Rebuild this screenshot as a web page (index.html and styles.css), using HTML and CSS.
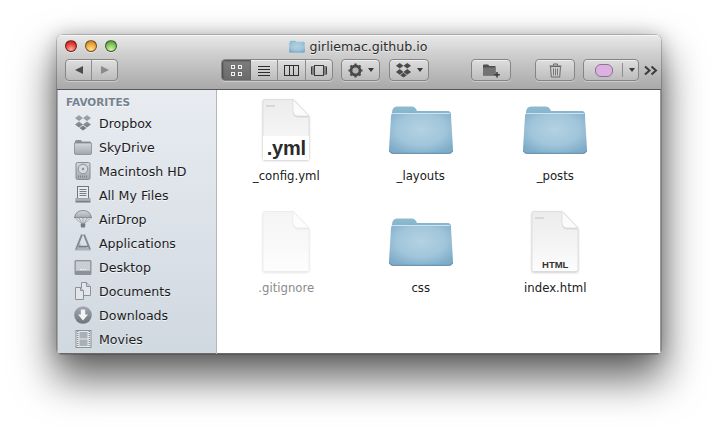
FILE: index.html
```html
<!DOCTYPE html>
<html lang="en">
<head>
<meta charset="utf-8">
<title>girliemac.github.io</title>
<link rel="stylesheet" href="styles.css">
</head>
<body>
<svg class="defs" width="0" height="0" aria-hidden="true">
  <defs>
    <radialGradient id="fold" cx=".5" cy=".4" r=".65"><stop offset="0" stop-color="#b4d2e2"/><stop offset=".6" stop-color="#a0c5da"/><stop offset="1" stop-color="#7fabc8"/></radialGradient>
    <linearGradient id="foldback" x1="0" y1="0" x2="0" y2="1"><stop offset="0" stop-color="#8fbbd2"/><stop offset="1" stop-color="#7eacc6"/></linearGradient>
    <linearGradient id="page" x1="0" y1="0" x2="0" y2="1"><stop offset="0" stop-color="#ececec"/><stop offset=".55" stop-color="#f4f4f4"/><stop offset="1" stop-color="#fdfdfd"/></linearGradient>
    <linearGradient id="side" x1="0" y1="0" x2="0" y2="1"><stop offset="0" stop-color="#a3a9b0"/><stop offset="1" stop-color="#6d747c"/></linearGradient>
    <linearGradient id="sidelight" x1="0" y1="0" x2="0" y2="1"><stop offset="0" stop-color="#d3d8dd"/><stop offset="1" stop-color="#9fa6ae"/></linearGradient>
    <symbol id="folder" viewBox="0 0 64 48">
      <path d="M3 7 Q3 .5 8 .5 H23 Q26 .5 27 3 L28 5 H59 Q62 5 62 9 V14 H2 Z" fill="url(#foldback)"/>
      <path d="M2 10 Q2 7 6 7 H58 Q62 7 62 10 L64 43 Q64 48 59 48 H5 Q0 48 0 43 Z" fill="url(#fold)"/>
      <path d="M3 8 Q3 7.500 6 7.500 H58 Q61 7.500 61 8" fill="none" stroke="#cfe4ef" stroke-width="1"/>
      <path d="M0 44 Q1 47.300 5 47.300 H59 Q63 47.300 64 44" fill="none" stroke="#6a97b6" stroke-width="1.300"/>
    </symbol>
    <symbol id="sheet" viewBox="0 0 48 62">
      <path d="M1 2 Q1 .5 2.500 .5 H31 L47 17 V59 Q47 60.500 45 60.500 H3 Q1 60.500 1 59 Z" fill="url(#page)" stroke="#d4d4d4" stroke-width=".6"/>
      <path d="M31 .5 L47 17 H37 Q32 17 31 13 Z" fill="#000" opacity=".09" transform="translate(0 1.500)"/>
      <path d="M31 .5 L47 17 H36 Q31.500 17 31 12 Z" fill="#fbfbfb" stroke="#cfcfcf" stroke-width=".5"/>
    </symbol>
    <symbol id="dbx" viewBox="0 0 18 18">
      <path d="M5 1 L9 4 L5 7 L1 4 Z M13 1 L17 4 L13 7 L9 4 Z M5 7.500 L9 10.500 L5 13.500 L1 10.500 Z M13 7.500 L17 10.500 L13 13.500 L9 10.500 Z M5.500 14 L9 11.500 L12.500 14 L9 16.500 Z"/>
    </symbol>
  </defs>
</svg>

<main class="window">
  <header class="chrome">
    <div class="titlebar">
      <div class="lights">
        <span class="light red"></span><span class="light amber"></span><span class="light green"></span>
      </div>
      <div class="title">
        <svg class="title-icon" width="16" height="13"><use href="#folder"/></svg>
        <span>girliemac.github.io</span>
      </div>
    </div>
    <div class="toolbar">
      <div class="btn nav">
        <span class="nav-part divided"><svg width="10" height="10" viewBox="0 0 10 10"><path d="M9 1 V9 L1 5 Z" fill="#4c4c4c"/></svg></span>
        <span class="nav-part"><svg width="10" height="10" viewBox="0 0 10 10"><path d="M1 1 V9 L9 5 Z" fill="#8a8a8a"/></svg></span>
      </div>
      <div class="btn views">
        <span class="view active"><svg width="13" height="13" viewBox="0 0 13 13" fill="none" stroke="#f0f0f0"><rect x="1.500" y="1.500" width="3" height="3"/><rect x="8.500" y="1.500" width="3" height="3"/><rect x="1.500" y="8.500" width="3" height="3"/><rect x="8.500" y="8.500" width="3" height="3"/></svg></span>
        <span class="view divided"><svg width="14" height="13" viewBox="0 0 14 13" stroke="#2e2e2e"><path d="M1 2.500 H13 M1 5.500 H13 M1 8.500 H13 M1 11.500 H13"/></svg></span>
        <span class="view divided"><svg width="15" height="13" viewBox="0 0 15 13" fill="none" stroke="#2e2e2e"><rect x=".5" y="1.500" width="14" height="10"/><path d="M5.500 1.500 V11.500 M9.500 1.500 V11.500"/></svg></span>
        <span class="view"><svg width="16" height="13" viewBox="0 0 16 13" fill="none" stroke="#3a3a3a"><rect x="3.500" y="1.500" width="9" height="10"/><path d="M.5 2.500 V10.500 M2 2 V11"/><path d="M14 2 V11 M15.500 2.500 V10.500"/></svg></span>
      </div>
      <div class="btn menu gear">
        <svg width="15" height="15" viewBox="0 0 15 15"><circle cx="7.500" cy="7.500" r="4.600" fill="none" stroke="#4a4a4a" stroke-width="2.600"/><path d="M7.500 .5 V14.500 M.5 7.500 H14.500 M2.500 2.500 L12.500 12.500 M12.500 2.500 L2.500 12.500" stroke="#4a4a4a" stroke-width="2.200"/><circle cx="7.500" cy="7.500" r="3" fill="#b5b5b5"/></svg>
        <span class="caret"></span>
      </div>
      <div class="btn menu dropbox">
        <svg class="dbx-tool" width="17" height="17"><use href="#dbx"/></svg>
        <span class="caret"></span>
      </div>
      <div class="btn square newfolder">
        <svg width="19" height="15" viewBox="0 0 19 15"><path d="M1 2.500 Q1 1.500 2 1.500 H6 L7.500 3 H13.500 V12.500 H1 Z" fill="#4f4f4f"/><path d="M1 4.500 H13.500 V12.500 H1 Z" fill="#737373"/><path d="M15 9 V14.500 M12.300 11.700 H17.800" stroke="#3a3a3a" stroke-width="1.500"/></svg>
      </div>
      <div class="btn square trash">
        <svg width="13" height="15" viewBox="0 0 13 15"><path d="M.5 3 H12.500 M4.500 2.500 V1 H8.500 V2.500" fill="none" stroke="#666"/><path d="M1.500 3.500 H11.500 L10.700 14 H2.300 Z" fill="#cfcfcf" stroke="#666"/><path d="M4.500 5.500 V12.500 M6.500 5.500 V12.500 M8.500 5.500 V12.500" stroke="#777"/></svg>
      </div>
      <div class="btn label">
        <span class="label-pill"></span>
        <span class="label-sep"></span>
        <span class="caret"></span>
      </div>
      <svg class="more" width="14" height="11" viewBox="0 0 14 11" fill="none" stroke="#3c3c3c" stroke-width="2"><path d="M1 1.500 L5.500 5.500 L1 9.500 M7.500 1.500 L12 5.500 L7.500 9.500"/></svg>
    </div>
  </header>

  <div class="body">
    <nav class="sidebar">
      <div class="side-head">FAVORITES</div>
      <ul class="side-list">
        <li class="side-item"><svg class="side-icon dbx-side" width="18" height="18"><use href="#dbx"/></svg>Dropbox</li>
        <li class="side-item"><svg class="side-icon" width="18" height="18" viewBox="0 0 18 18"><path d="M1 3.500 Q1 2 2.500 2 H7 L8 3.500 H16 Q17 3.500 17 5 V7 H1 Z" fill="#8a9098"/><path d="M.5 5 H17.500 V15 Q17.500 16.500 16 16.500 H2 Q.5 16.500 .5 15 Z" fill="url(#sidelight)" stroke="#7b828a" stroke-width=".7"/></svg>SkyDrive</li>
        <li class="side-item"><svg class="side-icon" width="18" height="18" viewBox="0 0 18 18"><rect x="2" y=".5" width="14" height="17" rx="1.500" fill="url(#sidelight)" stroke="#858c94"/><circle cx="9" cy="7" r="4.800" fill="#d5dade" stroke="#8b929a"/><circle cx="9" cy="7" r="1.200" fill="#8b929a"/><path d="M4 14.500 H14" stroke="#7d848c" stroke-width="2" stroke-dasharray="1 1"/></svg>Macintosh HD</li>
        <li class="side-item"><svg class="side-icon" width="18" height="18" viewBox="0 0 18 18"><rect x="3.500" y=".5" width="11" height="12" fill="#e8ebee" stroke="#6d747c"/><path d="M5.500 3.500 H12.500 M5.500 5.500 H12.500 M5.500 7.500 H12.500 M5.500 9.500 H12.500" stroke="#767d85"/><path d="M1.500 12 H16.500 V16.500 H1.500 Z" fill="url(#side)"/><path d="M2 14 H16" stroke="#e8ebee" stroke-opacity=".6"/></svg>All My Files</li>
        <li class="side-item"><svg class="side-icon" width="18" height="18" viewBox="0 0 18 18"><path d="M.5 8 Q1.500 .5 9 .5 Q16.500 .5 17.500 8 Q15 6.500 13 8 Q11 6.500 9 8 Q7 6.500 5 8 Q3 6.500 .5 8 Z" fill="url(#sidelight)" stroke="#737a82" stroke-width=".8"/><path d="M1.500 8 L9 15 L16.500 8 M5 8 L9 15 L13 8 M9 8 V15" fill="none" stroke="#858c94" stroke-width=".7"/><rect x="6.800" y="13.500" width="4.400" height="4" rx=".8" fill="#737a82"/></svg>AirDrop</li>
        <li class="side-item"><svg class="side-icon" width="18" height="18" viewBox="0 0 18 18"><path d="M10 .5 L16 15.500 M8 .5 L2 15.500" fill="none" stroke="#838a92" stroke-width="2"/><path d="M.5 16.500 L5.500 9.500 H6.500 V13 H12 L17.500 16.500 Z" fill="#9aa0a8" fill-opacity=".7"/><path d="M4.500 12.500 H14" stroke="#737a82" stroke-width="1.300"/></svg>Applications</li>
        <li class="side-item"><svg class="side-icon" width="18" height="18" viewBox="0 0 18 18"><rect x=".5" y="2" width="17" height="15" rx="1.500" fill="#8b929a"/><rect x="1.800" y="3.300" width="14.400" height="9.500" fill="#c8ced4"/><path d="M6 11.500 H12" stroke="#f4f6f8" stroke-dasharray="1.500 1"/></svg>Desktop</li>
        <li class="side-item"><svg class="side-icon" width="18" height="18" viewBox="0 0 18 18"><g fill="#e2e6ea" stroke="#8b929a"><path d="M7.500 .5 H12.500 L16.500 4.500 V13.500 H7.500 Z"/><path d="M12.500 .5 V4.500 H16.500" fill="#c8ced4"/><path d="M1.500 5.500 H6.500 L9.500 8.500 V17.500 H1.500 Z"/><path d="M6.500 5.500 V8.500 H9.500" fill="#c8ced4"/></g></svg>Documents</li>
        <li class="side-item"><svg class="side-icon" width="18" height="18" viewBox="0 0 18 18"><circle cx="9" cy="9" r="8.800" fill="url(#side)"/><path d="M6.800 3.500 H11.200 V8.500 H14 L9 14.500 L4 8.500 H6.800 Z" fill="#f2f4f6"/></svg>Downloads</li>
        <li class="side-item"><svg class="side-icon" width="18" height="18" viewBox="0 0 18 18"><rect x="2" y=".5" width="15" height="17" fill="#e6e9ec" stroke="#8b929a"/><rect x="5.500" y="2" width="8" height="6.500" fill="#a9b0b8"/><rect x="5.500" y="9.500" width="8" height="6.500" fill="#a9b0b8"/><path d="M3.700 1 V17 M15.300 1 V17" stroke="#8b929a" stroke-width="1.500" stroke-dasharray="1 1"/></svg>Movies</li>
      </ul>
    </nav>

    <section class="files">
      <figure class="file">
        <div class="icon-box">
          <svg class="doc" width="48" height="62"><use href="#sheet"/></svg>
          <span class="doc-lines"></span>
          <span class="doc-big">.yml</span>
        </div>
        <figcaption>_config.yml</figcaption>
      </figure>
      <figure class="file">
        <div class="icon-box"><svg class="fold" width="64" height="48"><use href="#folder"/></svg></div>
        <figcaption>_layouts</figcaption>
      </figure>
      <figure class="file">
        <div class="icon-box"><svg class="fold" width="64" height="48"><use href="#folder"/></svg></div>
        <figcaption>_posts</figcaption>
      </figure>
      <figure class="file hidden-file">
        <div class="icon-box"><svg class="doc" width="48" height="62"><use href="#sheet"/></svg></div>
        <figcaption>.gitignore</figcaption>
      </figure>
      <figure class="file">
        <div class="icon-box"><svg class="fold" width="64" height="48"><use href="#folder"/></svg></div>
        <figcaption>css</figcaption>
      </figure>
      <figure class="file">
        <div class="icon-box">
          <svg class="doc" width="48" height="62"><use href="#sheet"/></svg>
          <span class="doc-lines"></span>
          <span class="doc-small">HTML</span>
        </div>
        <figcaption>index.html</figcaption>
      </figure>
    </section>
  </div>
</main>
</body>
</html>
```

FILE: styles.css
```css
* { box-sizing: border-box; }
html, body { margin: 0; height: 100%; background: #fff; overflow: hidden; }
body { padding: 35px 0 0 57px; font-family: "DejaVu Sans", sans-serif; }
.defs { display: block; height: 0; }

.window {
  width: 604px;
  height: 319px;
  border-radius: 5px 5px 4px 4px;
  box-shadow: 0 22px 40px 3px rgba(0, 0, 0, .6), 0 0 18px rgba(0, 0, 0, .22), 0 0 0 .5px rgba(0, 0, 0, .35);
  display: flex;
  flex-direction: column;
  overflow: hidden;
  background: #fff;
}

.chrome {
  height: 55px;
  flex: none;
  background: linear-gradient(#e9e9e9, #cfcfcf 35%, #a9a9a9);
  border-bottom: 1px solid #585858;
  box-shadow: inset 0 1px 0 #f6f6f6;
}

.titlebar { height: 24px; padding-bottom: 2px; position: relative; display: flex; justify-content: center; align-items: center; }
.lights { position: absolute; left: 8px; top: 5px; display: flex; gap: 8px; }
.light { width: 12px; height: 12px; border-radius: 50%; border: .5px solid rgba(0, 0, 0, .5); box-shadow: 0 1px 0 rgba(255, 255, 255, .45); }
.red { background: radial-gradient(circle at 50% 85%, #ffb0a8, #e8413a 55%, #a81a18); }
.amber { background: radial-gradient(circle at 50% 85%, #ffe39a, #eea63b 55%, #b86f16); }
.green { background: radial-gradient(circle at 50% 85%, #d6f5a8, #80c25a 55%, #3e8a30); }

.title { display: flex; align-items: center; gap: 5px; font-size: 12.600px; color: #2c2c2c; text-shadow: 0 1px 0 rgba(255, 255, 255, .6); margin-left: -2px; }
.title-icon { display: block; }

.toolbar { height: 30px; display: flex; align-items: flex-start; padding: 0 0 0 8px; }
.btn {
  height: 22px;
  border: 1px solid #858585;
  border-radius: 4px;
  background: linear-gradient(#dedede, #bcbcbc);
  box-shadow: inset 0 1px 0 rgba(255, 255, 255, .5), 0 1px 0 rgba(255, 255, 255, .35);
  display: flex;
  align-items: center;
  justify-content: center;
}
.nav { width: 53px; }
.nav-part { flex: 1; height: 100%; display: flex; align-items: center; justify-content: center; }
.divided { border-right: 1px solid #8d8d8d; }
.views { width: 112px; margin-left: 103px; overflow: hidden; }
.view { flex: 1; height: 100%; display: flex; align-items: center; justify-content: center; }
.view.active { flex: 0 0 29px; background: linear-gradient(#7e7e7e, #6a6a6a); box-shadow: inset 1px 1px 2px rgba(0, 0, 0, .4); border-right: 1px solid #666; }
.view svg { display: block; }
.menu { gap: 5px; }
.gear { width: 39px; margin-left: 8px; }
.dropbox { width: 40px; margin-left: 9px; }
.dbx-tool { fill: #4a4a4a; }
.caret { width: 0; height: 0; border-left: 3.500px solid transparent; border-right: 3.500px solid transparent; border-top: 4px solid #3a3a3a; }
.square { width: 40px; }
.newfolder { margin-left: 42px; }
.trash { margin-left: 24px; }
.label { width: 56px; margin-left: 8px; justify-content: flex-start; padding-left: 11px; }
.label-pill { flex: 0 0 18px; height: 13px; border-radius: 6px; background: #dcb0e0; border: 1px solid #8f6f96; }
.label-sep { width: 1px; height: 14px; background: #8d8d8d; margin: 0 6px 0 9px; }
.more { margin: 6px 0 0 5px; }

.body { flex: 1; display: flex; min-height: 0; }
.sidebar {
  width: 160px;
  flex: none;
  background: linear-gradient(#e8ecf1, #d0d8e0);
  border-right: 1px solid #b4b8bd;
  box-shadow: inset 1px 0 0 #a4a8ad, inset 0 -1px 0 #6a6a6a;
  padding: 4px 0 0 9px;
}
.side-head { font-size: 10.500px; font-weight: bold; color: #76828f; line-height: 16px; margin-bottom: 1px; text-shadow: 0 1px 0 rgba(255, 255, 255, .7); }
.side-list { list-style: none; margin: 0; padding: 0; }
.side-item { height: 24px; display: flex; align-items: center; gap: 7px; padding-left: 8px; font-size: 12.600px; color: #1c1c1c; text-shadow: 0 1px 0 rgba(255, 255, 255, .7); }
.side-icon { flex: none; }
.dbx-side { fill: url(#side); }

.files {
  flex: 1;
  background: #fff;
  box-shadow: inset -1px 0 0 #9a9a9a, inset 0 -1px 0 #6a6a6a;
  display: grid;
  grid-template-columns: repeat(3, 134.500px);
  grid-auto-rows: 112px;
  padding: 8px 0 0 2px;
  align-content: start;
}
.file { margin: 0; display: flex; flex-direction: column; align-items: center; }
.file figcaption { font-size: 11.700px; color: #202020; line-height: 16px; margin-top: 6px; }
.icon-box { width: 64px; height: 64px; position: relative; display: flex; align-items: center; justify-content: center; }
.doc { display: block; filter: drop-shadow(0 1px 1px rgba(0, 0, 0, .2)); }
.doc-lines { position: absolute; left: 12px; top: 7px; width: 9px; height: 2px; background: #d8d8d8; }
.doc-big { position: absolute; left: 9px; right: 9px; bottom: 2px; height: 24px; background: #fff; text-align: center; font-family: "Liberation Sans", sans-serif; font-weight: bold; font-size: 20px; letter-spacing: -.2px; line-height: 24px; color: #2b2b2b; }
.doc-small { position: absolute; left: 8px; right: 8px; bottom: 3px; text-align: center; font-family: "Liberation Sans", sans-serif; font-weight: bold; font-size: 9.500px; line-height: 12px; color: #333; }
.hidden-file .doc { opacity: .55; }
.hidden-file figcaption { color: #8a8a8a; }
```
